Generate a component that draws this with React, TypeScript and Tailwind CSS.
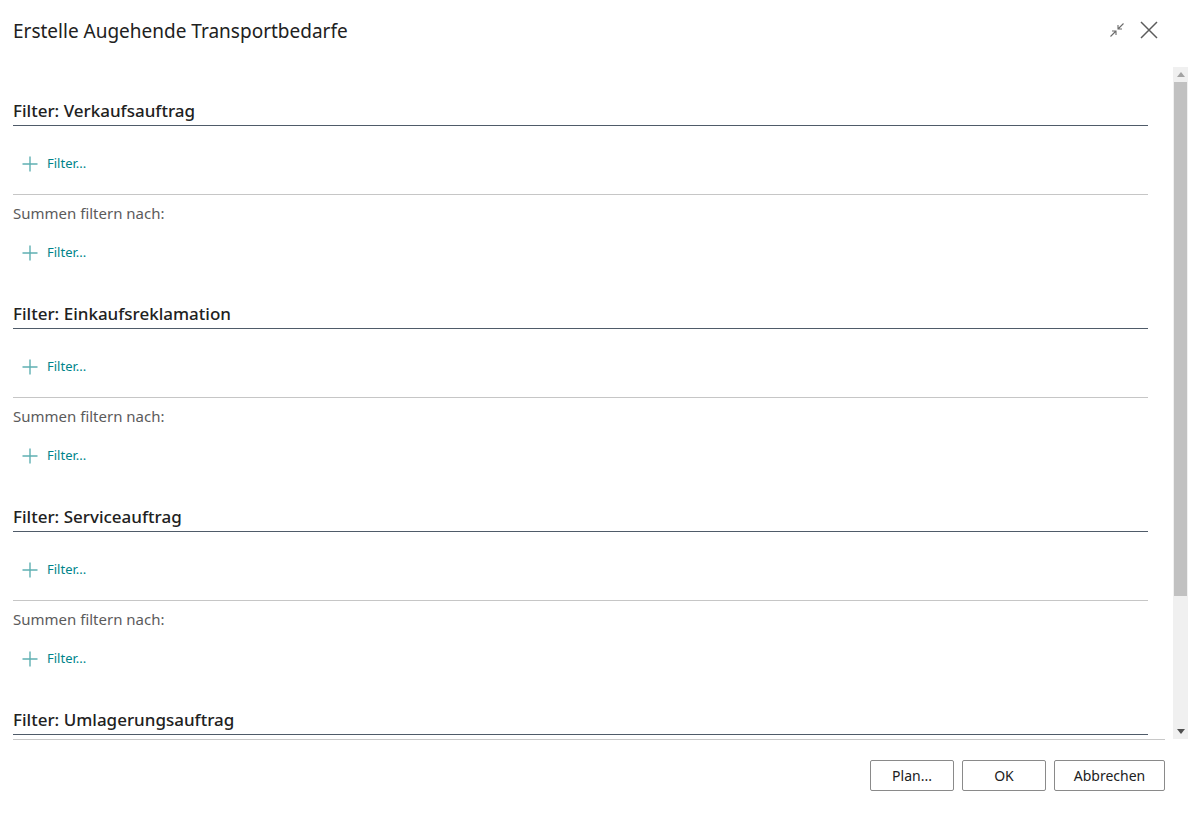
import React from "react"

const font = { fontFamily: '"Segoe UI", "Noto Sans", "Open Sans", sans-serif' }

function PlusIcon() {
  return (
    <svg width="18" height="18" viewBox="0 0 18 18" className="shrink-0">
      <path d="M9 1.5v15M1.5 9h15" stroke="#5fb0b2" strokeWidth="1.4" fill="none" />
    </svg>
  )
}

function FilterRow() {
  return (
    <div className="flex items-center gap-2 h-[30px] pl-[8px] text-[13px] text-[#00848a] cursor-pointer">
      <PlusIcon />
      <span>Filter...</span>
    </div>
  )
}

function SectionHeader({ title }: { title: string }) {
  return (
    <div className="h-[30px] flex items-center text-[17px] font-medium text-[#212121] border-b border-[#4f5b69]">
      <span>{title}</span>
    </div>
  )
}

function Section({ title }: { title: string }) {
  return (
    <div className="pb-[31px]">
      <SectionHeader title={title} />
      <div className="pt-[23px]">
        <FilterRow />
      </div>
      <div className="mt-[15px] border-t border-[#c6c6c6]" />
      <div className="pt-[8px] text-[15px] text-[#5b5b5b] leading-[20px]">Summen filtern nach:</div>
      <div className="pt-[15px]">
        <FilterRow />
      </div>
    </div>
  )
}

export default function App() {
  return (
    <div className="w-[1189px] h-[816px] bg-white flex flex-col overflow-hidden" style={font}>
      <div className="h-[67px] flex items-start justify-between pl-[13px] pr-[30px] pt-[18px]">
        <div className="text-[19px] text-[#212121] leading-[26px]">Erstelle Augehende Transportbedarfe</div>
        <div className="flex items-center gap-[12px] pt-[2px]">
          <svg width="20" height="20" viewBox="0 0 20 20">
            <path d="M16.5 3.5L11 9M11 5v4h4M3.5 16.5L9 11M5 11h4v4" stroke="#6b6b6b" strokeWidth="1.1" fill="none" />
          </svg>
          <svg width="20" height="20" viewBox="0 0 20 20">
            <path d="M2 2l16 16M18 2L2 18" stroke="#5c5c5c" strokeWidth="1.5" fill="none" />
          </svg>
        </div>
      </div>
      <div className="flex h-[672px]">
        <div className="flex-1 overflow-hidden pl-[13px] pr-[25px] pt-[29px]">
          <Section title="Filter: Verkaufsauftrag" />
          <Section title="Filter: Einkaufsreklamation" />
          <Section title="Filter: Serviceauftrag" />
          <SectionHeader title="Filter: Umlagerungsauftrag" />
        </div>
        <div className="w-[15px] mr-[1px] bg-[#f0f0f0] flex flex-col items-center">
          <div className="h-[15px] flex items-center justify-center">
            <svg width="8" height="5" viewBox="0 0 8 5"><path d="M0 5L4 0l4 5z" fill="#a3a3a3" /></svg>
          </div>
          <div className="w-[13px] h-[514px] bg-[#c1c1c1]" />
          <div className="flex-1" />
          <div className="h-[15px] flex items-center justify-center">
            <svg width="8" height="5" viewBox="0 0 8 5"><path d="M0 0h8L4 5z" fill="#505050" /></svg>
          </div>
        </div>
      </div>
      <div className="ml-[13px] mr-[24px] border-t border-[#c8c8c8]" />
      <div className="flex justify-end gap-[8px] pr-[24px] pt-[20px]">
        <button className="w-[84px] h-[31px] border border-[#8a8a8a] rounded-[2px] text-[14px] text-[#212121] bg-white">Plan...</button>
        <button className="w-[84px] h-[31px] border border-[#8a8a8a] rounded-[2px] text-[14px] text-[#212121] bg-white">OK</button>
        <button className="w-[111px] h-[31px] border border-[#8a8a8a] rounded-[2px] text-[14px] text-[#212121] bg-white">Abbrechen</button>
      </div>
    </div>
  )
}
